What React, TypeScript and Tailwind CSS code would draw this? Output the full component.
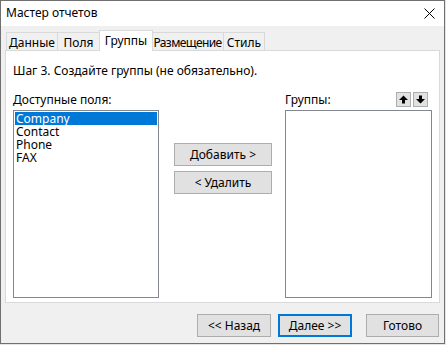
const tabs = [
  { label: 'Данные', w: 'w-[52px]', extra: '' },
  { label: 'Поля', w: 'w-[43px]', extra: '' },
  { label: 'Группы', w: 'w-[54px]', extra: '' },
  { label: 'Размещение', w: 'w-[73px]', extra: 'tracking-[-0.6px]' },
  { label: 'Стиль', w: 'w-[42px]', extra: '' },
];

const fields = ['Company', 'Contact', 'Phone', 'FAX'];

function Arrow({ down }: { down?: boolean }) {
  return (
    <svg width="9" height="9" viewBox="0 0 9 9" className={down ? 'rotate-180' : ''}>
      <polygon points="4.5,0.5 9,5 6,5 6,8.5 3,8.5 3,5 0,5" fill="#000" />
    </svg>
  );
}

export default function App() {
  return (
    <div className="w-[446px] h-[345px] bg-[#e6e6e6] font-['Noto_Sans',sans-serif] text-[12px] text-black leading-[15px]">
      <div className="w-[445px] h-[344px] border border-[#707070] bg-[#f0f0f0] flex flex-col">
        {/* title bar */}
        <div className="h-[25px] bg-white flex items-center justify-between pl-[5px] pr-[9px] shrink-0">
          <span className="mt-[-2px]">Мастер отчетов</span>
          <svg width="11" height="11" viewBox="0 0 11 11" className="mt-[-1px]">
            <path d="M0.5 0.5 L10.5 10.5 M10.5 0.5 L0.5 10.5" stroke="#000" strokeWidth="1" />
          </svg>
        </div>

        <div className="flex flex-col px-[4px]">
          {/* tabs */}
          <div className="h-[24px] flex items-end pl-[1px]">
            {tabs.map((t, i) => {
              const active = t.label === 'Группы';
              return (
                <div
                  key={t.label}
                  className={
                    active
                      ? `relative z-10 ${t.w} h-[21px] -mb-px -mx-[1px] bg-white border border-b-0 border-[#d9d9d9] flex items-center justify-center pb-[2px] ${t.extra}`
                      : `${t.w} h-[18px] bg-[#f0f0f0] border border-b-0 border-[#d9d9d9] ${i === 0 ? '' : '-ml-px'} flex items-center justify-center pt-[1px] ${t.extra}`
                  }
                >
                  {t.label}
                </div>
              );
            })}
          </div>

          {/* panel */}
          <div className="h-[253px] w-[435px] bg-white border border-[#d9d9d9] px-[7px] pt-[12px]">
            <div>Шаг 3. Создайте группы (не обязательно).</div>

            <div className="flex mt-[14px]">
              {/* left list */}
              <div className="flex flex-col w-[146px]">
                <div className="h-[18px]">Доступные поля:</div>
                <div className="h-[188px] border border-[#828790] bg-white p-[1px]">
                  {fields.map((f, i) => (
                    <div
                      key={f}
                      className={`h-[13px] leading-[13px] pl-[1px] ${i === 0 ? 'bg-[#0078d7] text-white' : ''}`}
                    >
                      {f}
                    </div>
                  ))}
                </div>
              </div>

              {/* middle buttons */}
              <div className="flex flex-col ml-[15px] pt-[51px] gap-[5px]">
                <button className="w-[98px] h-[23px] bg-[#e1e1e1] border border-[#adadad] flex items-center justify-center">
                  Добавить &gt;
                </button>
                <button className="w-[98px] h-[23px] bg-[#e1e1e1] border border-[#adadad] flex items-center justify-center">
                  &lt; Удалить
                </button>
              </div>

              {/* right list */}
              <div className="flex flex-col w-[147px] ml-[13px]">
                <div className="h-[18px] flex items-start justify-between">
                  <span>Группы:</span>
                  <div className="flex gap-[2px] mr-[4px]">
                    <div className="w-[15px] h-[15px] bg-[#e1e1e1] border border-[#adadad] flex items-center justify-center">
                      <Arrow />
                    </div>
                    <div className="w-[15px] h-[15px] bg-[#e1e1e1] border border-[#adadad] flex items-center justify-center">
                      <Arrow down />
                    </div>
                  </div>
                </div>
                <div className="h-[188px] border border-[#828790] bg-white" />
              </div>
            </div>
          </div>

          {/* footer */}
          <div className="flex justify-end items-center gap-[7px] pt-[11px] pr-[1px]">
            <button className="w-[74px] h-[23px] bg-[#e1e1e1] border border-[#adadad] flex items-center justify-center">
              &lt;&lt; Назад
            </button>
            <button className="w-[74px] h-[23px] bg-[#e1e1e1] border-2 border-[#0078d7] flex items-center justify-center">
              Далее &gt;&gt;
            </button>
            <button className="w-[73px] h-[23px] ml-[7px] bg-[#e1e1e1] border border-[#adadad] flex items-center justify-center">
              Готово
            </button>
          </div>
        </div>
      </div>
    </div>
  );
}
